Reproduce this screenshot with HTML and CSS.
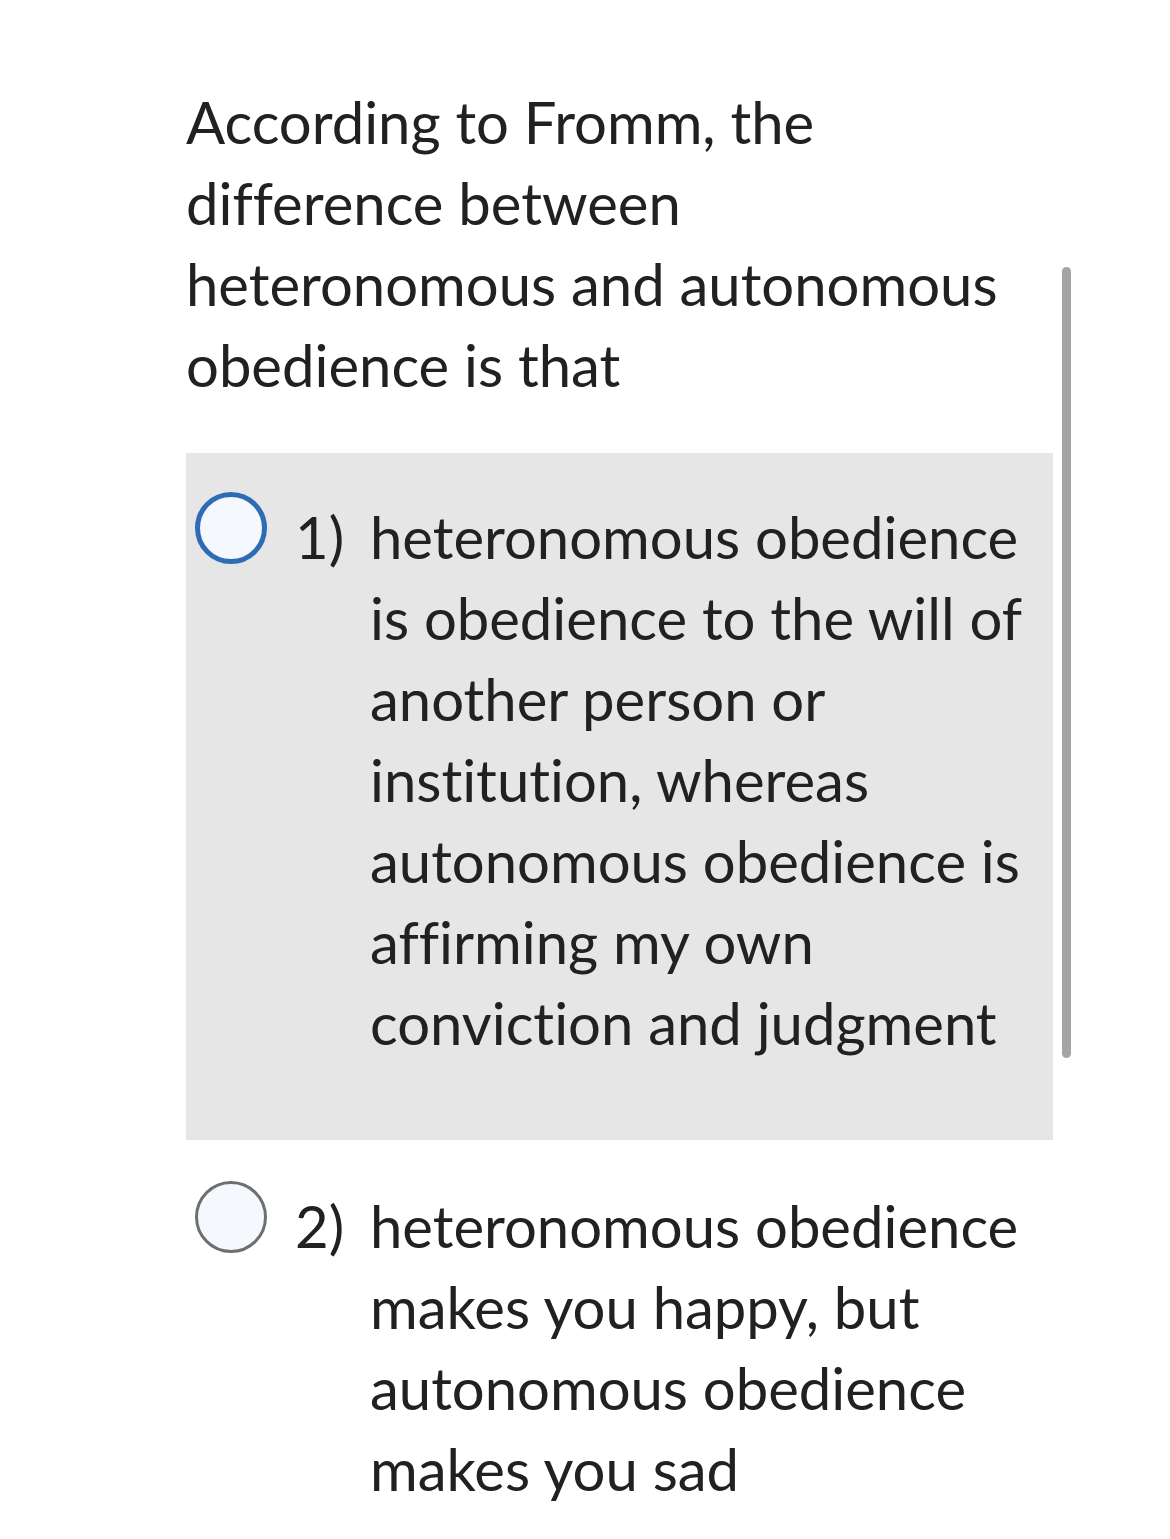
FILE: index.html
```html
<!DOCTYPE html>
<html lang="en">
<head>
  <meta charset="UTF-8" />
  <meta name="viewport" content="width=device-width, initial-scale=1.0"/>
  <title>Question</title>
  <link rel="stylesheet" href="styles.css">
</head>
<body>
  <div class="quiz">
    <p class="question">According to Fromm, the difference between heteronomous and autonomous obedience is that</p>

    <div class="answers">
      <label class="answer selected">
        <span class="radio"></span>
        <span class="num">1)</span>
        <span class="text">heteronomous obedience is obedience to the will of another person or institution, whereas autonomous obedience is affirming my own conviction and judgment</span>
      </label>
      <label class="answer">
        <span class="radio"></span>
        <span class="num">2)</span>
        <span class="text">heteronomous obedience makes you happy, but autonomous obedience makes you sad</span>
      </label>
    </div>

    <div class="scrollbar"></div>
  </div>
</body>
</html>
```

FILE: styles.css
```css
body {
  font-family: Lato, 'Noto Sans', sans-serif;
  font-variant-ligatures: none;
  margin: 0;
  background: #fff;
  color: #212121;
}
.quiz {
  position: relative;
  width: 867px;
  margin-left: 186px;
  padding-top: 81px;
  font-size: 58px;
  line-height: 81px;
}
.question {
  margin: 0 0 48px;
}
.answer {
  display: flex;
  align-items: flex-start;
  padding: 43px 15px 77px 9px;
}
.answer + .answer {
  padding-top: 45px;
}
.answer.selected {
  background: #e6e6e6;
}
.radio {
  flex: none;
  width: 66px;
  height: 66px;
  margin-top: -4px;
  border: 3px solid #6d7071;
  border-radius: 50%;
  background: #f5f8fd;
}
.selected .radio {
  width: 62px;
  height: 62px;
  border: 5px solid #2e6db5;
}
.num {
  flex: none;
  width: 75px;
  margin-left: 28px;
}
.text {
  flex: 1;
}
.scrollbar {
  position: absolute;
  left: 876px;
  top: 267px;
  width: 9px;
  height: 791px;
  border-radius: 5px;
  background: #a4a4a4;
}
```
